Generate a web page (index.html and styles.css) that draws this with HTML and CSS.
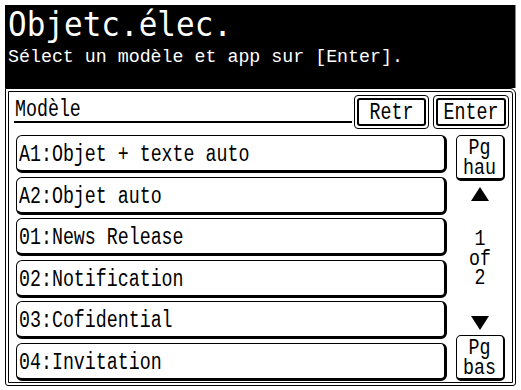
FILE: index.html
```html
<!DOCTYPE html>
<html>
<head>
<meta charset="utf-8">
<link rel="stylesheet" href="styles.css">
</head>
<body>
<div class="screen">
  <div class="header">
    <div class="title"><span class="title-txt">Objetc.élec.</span></div>
    <div class="subtitle">Sélect un modèle et app sur [Enter].</div>
  </div>
  <div class="panel">
    <div class="toprow">
      <div class="field"><span class="tall">Modèle</span></div>
      <div class="dbtn retr"><span class="dbtn-in"><span class="tall">Retr</span></span></div>
      <div class="dbtn enter"><span class="dbtn-in"><span class="tall">Enter</span></span></div>
    </div>
    <div class="main">
      <div class="list">
        <div class="item"><span class="tall">A1:Objet + texte auto</span></div>
        <div class="item"><span class="tall">A2:Objet auto</span></div>
        <div class="item"><span class="tall">01:News Release</span></div>
        <div class="item"><span class="tall">02:Notification</span></div>
        <div class="item"><span class="tall">03:Cofidential</span></div>
        <div class="item"><span class="tall">04:Invitation</span></div>
      </div>
      <div class="side">
        <div class="pgbtn"><span class="stack">Pg
hau</span></div>
        <svg class="tri up" width="20" height="16" viewBox="0 0 20 16"><polygon points="10,1 19,15 1,15" fill="#000"/></svg>
        <div class="counter"><span class="stack">1
of
2</span></div>
        <svg class="tri down" width="20" height="16" viewBox="0 0 20 16"><polygon points="1,1 19,1 10,15" fill="#000"/></svg>
        <div class="pgbtn"><span class="stack">Pg
bas</span></div>
      </div>
    </div>
  </div>
</div>
</body>
</html>
```
FILE: styles.css
```css
html, body {
  margin: 0;
  padding: 0;
  background: #fff;
}
body {
  font-family: "Liberation Mono", "DejaVu Sans Mono", monospace;
  color: #000;
}
.screen {
  margin: 5px 0 0 5px;
  width: 511px;
}
.tall {
  display: inline-block;
  transform: scaleY(1.3);
}
.header {
  background: #000;
  color: #fff;
  height: 83px;
  padding: 4px 0 0 3px;
  box-sizing: border-box;
  border-right: 1px solid #888;
}
.title {
  font-family: "DejaVu Sans Mono", monospace;
  font-size: 31px;
  line-height: 34px;
  height: 34px;
}
.title-txt {
  display: inline-block;
  transform-origin: 50% 100%;
  transform: scaleY(1.1);
}
.subtitle {
  font-size: 18.3px;
  line-height: 20px;
  margin-top: 4px;
}
.panel {
  height: 298px;
  box-sizing: border-box;
  border: 4px double #000;
  border-radius: 0 6px 3px 3px;
  padding: 3px 2px 0 5px;
}
.toprow {
  display: flex;
  align-items: flex-start;
  height: 34px;
}
.field {
  width: 338px;
  height: 28px;
  border-bottom: 2px solid #000;
  font-size: 18.3px;
  line-height: 28px;
  box-sizing: border-box;
  padding-left: 1px;
}
.dbtn {
  border: 1px solid #000;
  border-radius: 4px;
  padding: 2px;
  height: 34px;
  box-sizing: border-box;
  display: flex;
}
.retr {
  margin-left: 2px;
  width: 75px;
}
.enter {
  margin-left: 4px;
  width: 76px;
}
.dbtn-in {
  flex: 1;
  border: 2px solid #000;
  border-radius: 3px;
  display: flex;
  align-items: center;
  justify-content: center;
  font-size: 18.3px;
}
.main {
  display: flex;
  margin-top: 6px;
}
.list {
  margin-left: 2px;
  width: 431px;
  display: flex;
  flex-direction: column;
  gap: 3.6px;
}
.item {
  height: 38px;
  box-sizing: border-box;
  border: 1px solid #000;
  border-right-width: 3px;
  border-bottom-width: 3px;
  border-radius: 6px;
  display: flex;
  align-items: center;
  padding: 2px 0 0 2px;
  font-size: 18.3px;
}
.side {
  flex: 1;
  display: flex;
  flex-direction: column;
  align-items: center;
  height: 246px;
  padding-left: 3px;
}
.stack {
  display: block;
  white-space: pre-line;
  text-align: center;
  font-size: 18.3px;
  line-height: 16px;
  transform: scaleY(1.25);
}
.pgbtn {
  width: 49px;
  height: 46px;
  box-sizing: border-box;
  border: 1px solid #000;
  border-right-width: 2px;
  border-bottom-width: 3px;
  border-radius: 5px;
  display: flex;
  align-items: center;
  justify-content: center;
  padding-top: 1px;
}
.tri.up {
  margin-top: 5px;
}
.tri.down {
  margin-bottom: 4px;
}
.counter {
  flex: 1;
  display: flex;
  align-items: center;
  justify-content: center;
}
.counter .stack {
  line-height: 16.5px;
  transform: scaleY(1.2);
}
```
